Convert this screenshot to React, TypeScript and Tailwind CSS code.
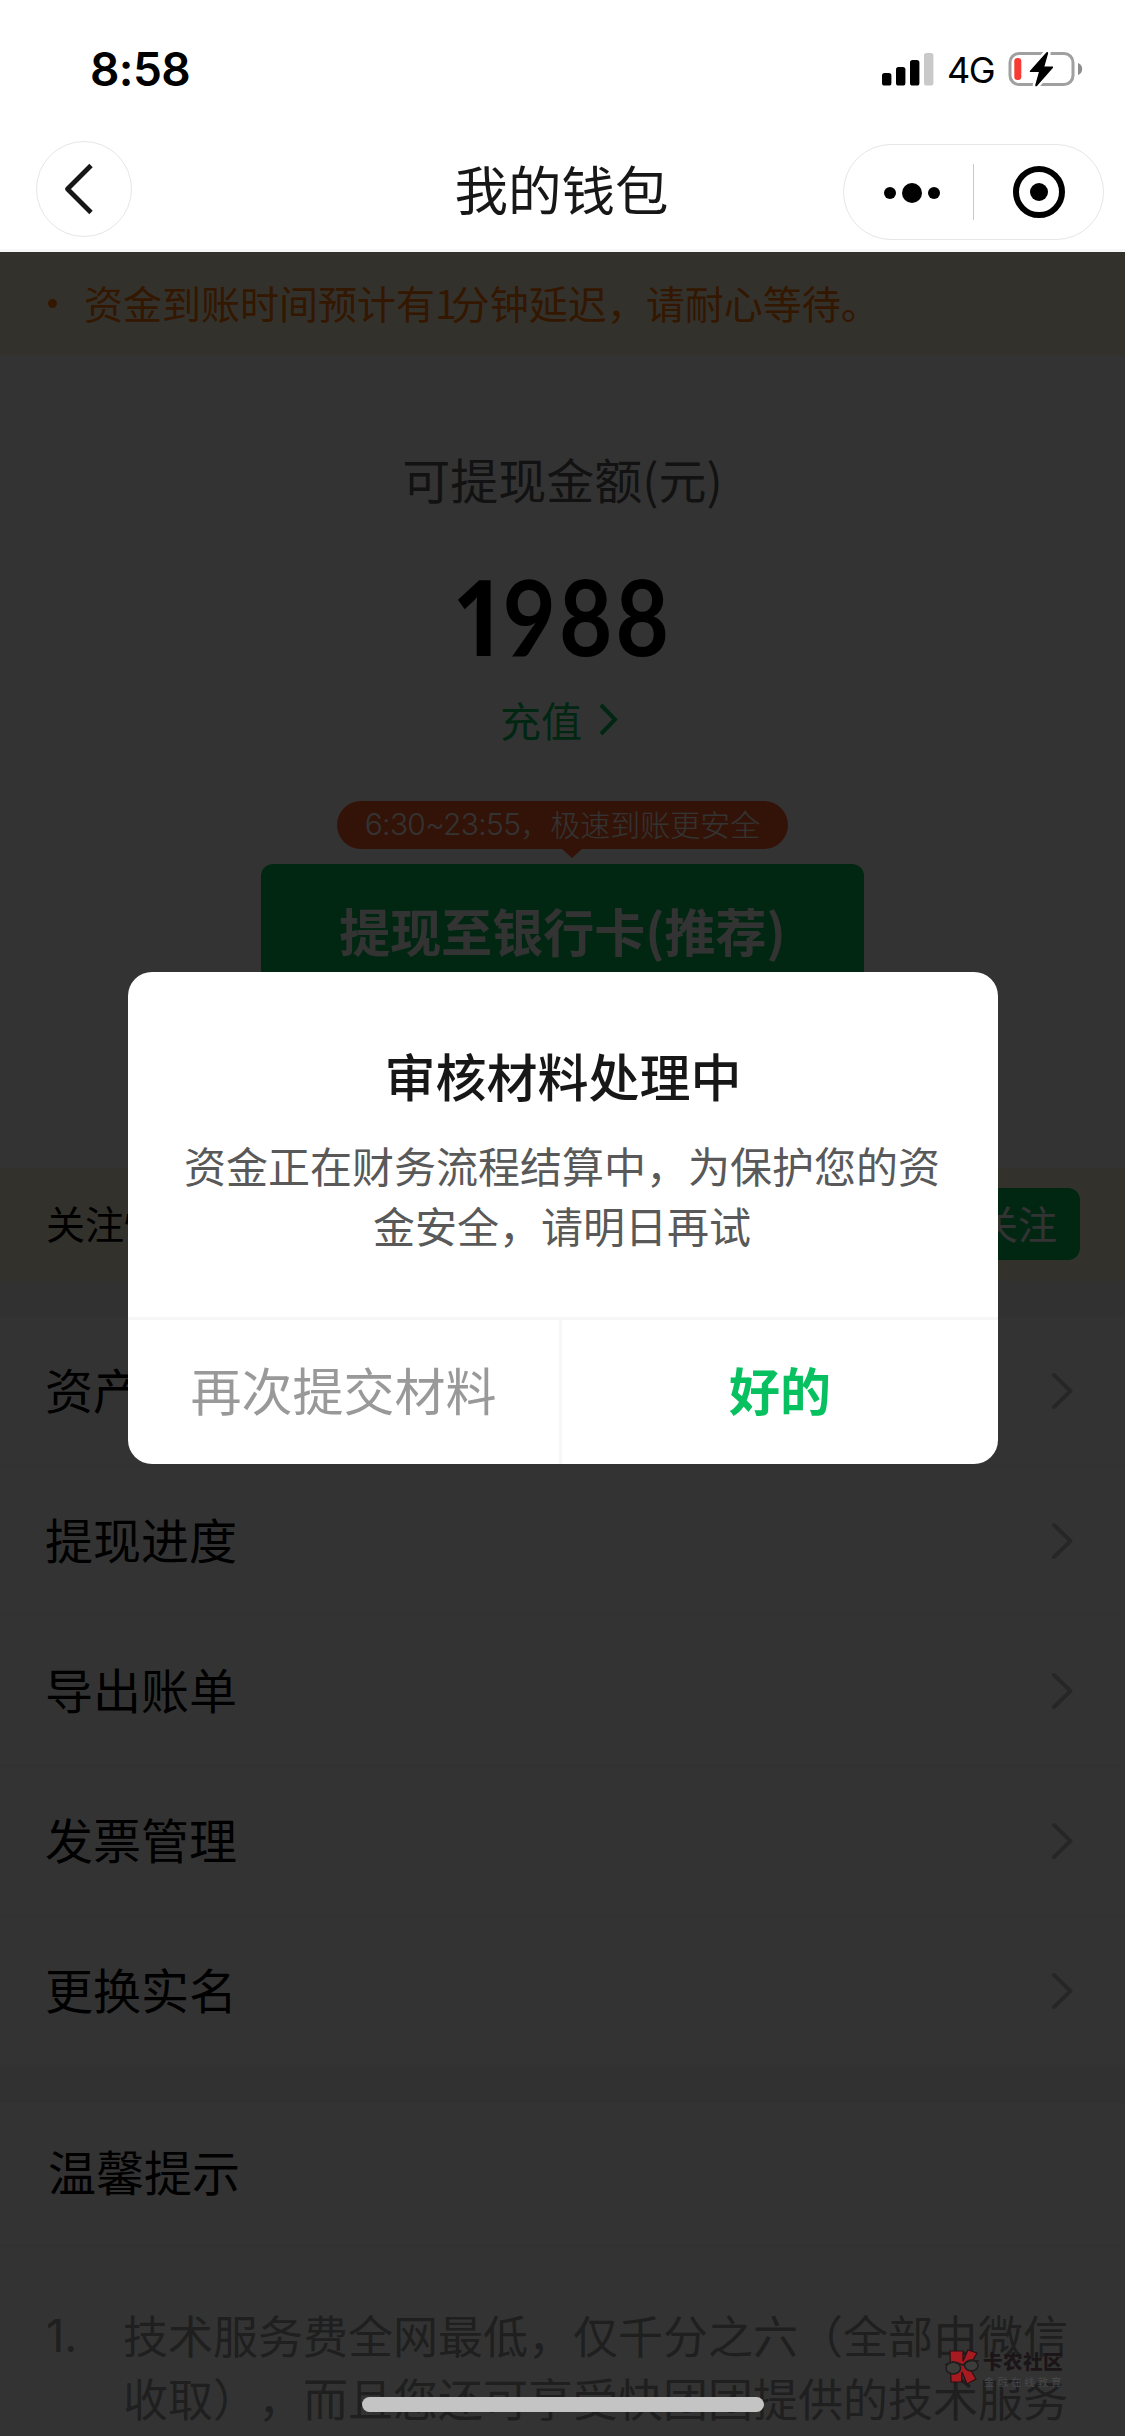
import React from "react";

const menuItems = ["资产明细", "提现进度", "导出账单", "发票管理", "更换实名"];

function StatusBar() {
  return (
    <div className="flex h-[132px] items-start justify-between pl-[90px] pr-[42px] pt-[44px]">
      <span className="font-[Inter] text-[46px] font-semibold leading-[50px] tracking-[-0.6px] text-black">8:58</span>
      <div className="flex items-center pt-[4px]">
        <svg width="52" height="34" viewBox="0 0 52 34">
          <rect x="0" y="21" width="9.4" height="12.5" rx="2.6" />
          <rect x="14" y="15" width="9.4" height="18.5" rx="2.6" />
          <rect x="28" y="8" width="9.4" height="25.5" rx="2.6" />
          <rect x="42" y="1" width="9.4" height="32.5" rx="2.6" fill="#c9c9c9" />
        </svg>
        <span className="ml-[13px] w-[49px] pt-[2px] font-[Inter] text-[36px] leading-[40px] tracking-[-1.4px] text-black">4G</span>
        <svg className="ml-[12px]" width="75" height="40" viewBox="0 0 75 40">
          <rect x="2" y="4.5" width="63" height="31" rx="9" fill="none" stroke="#a0a0a0" strokeWidth="3" />
          <path d="M70 14c2.7 1 4.2 3.3 4.2 6s-1.500 5-4.200 6z" fill="#8e8e8e" />
          <rect x="6.300" y="9" width="7" height="22" rx="3.200" fill="#f83a35" />
          <path d="M38.300 3.500 22 21.700c-.5.700-.1 1.400.7 1.400h8.200l-3.600 12.600c-.4 1.700.9 2.200 1.900 1L44.800 19c.6-.8.200-1.500-.7-1.500h-7.700l3.700-12.900c.4-1.600-.7-2.300-1.800-1.100z" fill="#000" stroke="#fff" strokeWidth="5" paintOrder="stroke" />
        </svg>
      </div>
    </div>
  );
}

function NavBar() {
  return (
    <div className="grid h-[120px] grid-cols-[1fr_auto_1fr] items-start border-b-[3px] border-[#f7f7f7]">
      <div className="ml-[36px] mt-[9px] flex h-24 w-24 items-center justify-center rounded-full border border-[#e6e6e6]">
        <svg className="mr-[10px]" width="32" height="56" viewBox="0 0 32 56" fill="none" stroke="#171717" strokeWidth="4.8" strokeLinejoin="round">
          <path d="M28 4.500 4.500 28 28 51.500" />
        </svg>
      </div>
      <h1 className="-ml-[2px] mt-[17px] text-[53.500px] leading-[78px] text-[#171717]">我的钱包</h1>
      <div className="mr-[21px] mt-[12px] flex h-24 w-[261px] items-center justify-self-end rounded-full border border-[#e6e6e6]">
        <div className="flex w-[129px] items-center justify-center gap-[6px] pl-[7px] pt-[1px]">
          <i className="h-3 w-3 rounded-full bg-black" />
          <i className="h-5 w-5 rounded-full bg-black" />
          <i className="h-3 w-3 rounded-full bg-black" />
        </div>
        <div className="h-14 w-px bg-[#c9c9c9]" />
        <div className="flex flex-1 items-center justify-center">
          <div className="flex h-[52px] w-[52px] items-center justify-center rounded-full border-[6px] border-black">
            <i className="h-[18px] w-[18px] rounded-full bg-black" />
          </div>
        </div>
      </div>
    </div>
  );
}

function Arrow() {
  return (
    <svg width="22" height="40" viewBox="0 0 22 40" fill="none" stroke="#bdbdbd" strokeWidth="4" strokeLinecap="round" strokeLinejoin="round">
      <path d="M3 4 19.500 20 3 36" />
    </svg>
  );
}

function Balance() {
  return (
    <section className="flex h-[813px] flex-col items-center">
      <p className="mt-[88px] text-[48px] leading-[70px] text-[#595959]">可提现金额(元)</p>
      <div className="mt-[47px] flex h-[110px] scale-x-[0.87] items-center text-[106px] font-bold leading-[110px] text-black">
        <span className="font-['Open_Sans'] tracking-[-3px]">1</span>
        <span className="font-[Lato] tracking-[3.500px]">988</span>
      </div>
      <div className="mr-[6px] mt-[18px] flex items-center gap-[17px] text-[#07c160]">
        <span className="text-[41px] leading-[62px]">充值</span>
        <svg width="20" height="36" viewBox="0 0 20 36" fill="none" stroke="currentColor" strokeWidth="4">
          <path d="M2 4 16 18.500 2 33" />
        </svg>
      </div>
      <div className="relative mt-[51px] flex h-12 w-[451px] items-center justify-center rounded-full bg-[#ff6023] text-white">
        <span className="flex items-center pb-[5px] text-[30px] font-light leading-[46px]">
          <span className="pt-[2px] font-[Inter] tracking-[-0.7px]">6:30~23:55</span>，极速到账更安全
        </span>
        <i className="absolute left-[225px] top-12 h-0 w-0 border-x-[10px] border-t-[9px] border-x-transparent border-t-[#ff6023]" />
      </div>
      <div className="mt-[15px] flex h-[138px] w-[603px] items-center justify-center rounded-xl bg-[#07c160] pb-[6px] text-[51px] font-bold leading-[70px] text-white">
        提现至银行卡(推荐)
      </div>
    </section>
  );
}

function FollowBar() {
  return (
    <div className="flex h-[113px] items-center justify-between bg-[#fff5d7] px-[45px] text-[39px] leading-[56px]">
      <span className="-mt-[5px] ml-px text-black">关注快团团公众号</span>
      <span className="-mt-[2px] flex h-[72px] w-[124px] items-center justify-center rounded-xl bg-[#07c160] pb-[4px] text-white">关注</span>
    </div>
  );
}

function Dialog() {
  return (
    <div className="flex h-[492px] w-[870px] flex-col overflow-hidden rounded-[24px] bg-white">
      <div className="flex-1 text-center">
        <h2 className="mt-[67px] text-[51px] font-medium leading-[72px] text-[#171717]">审核材料处理中</h2>
        <p className="ml-[55px] mr-[57px] mt-[24px] text-[42px] leading-[60px] text-[#595959]">
          资金正在财务流程结算中，为保护您的资金安全，请明日再试
        </p>
      </div>
      <div className="flex h-[147px] border-t-[3px] border-[#f7f7f7] text-[51px] leading-[72px]">
        <button className="w-[434px] border-r-[3px] border-[#f7f7f7] pb-[7px] text-[#999]">再次提交材料</button>
        <button className="flex-1 pb-[7px] font-bold text-[#07c160]">好的</button>
      </div>
    </div>
  );
}

function Watermark() {
  return (
    <div className="absolute left-[944px] top-[2348px] flex items-start gap-[3px]">
      <svg width="36" height="37" viewBox="0 0 36 37">
        <path d="M6 3h13v10l5-11 9 3-8 14 7 12-9 5-5-12-.500 10H7z" fill="#a71a20" stroke="#251315" strokeWidth="1.200" />
        <ellipse cx="9.300" cy="20" rx="7.300" ry="6" fill="#3c3d3b" stroke="#211d1d" strokeWidth="1.600" />
        <ellipse cx="27.300" cy="17.500" rx="6.700" ry="5.500" fill="#3c3d3b" stroke="#211d1d" strokeWidth="1.600" />
        <path d="M1 17c4-3 11-4 15-1l3 1 2-2c4-3 9-3 14-2" fill="none" stroke="#211d1d" strokeWidth="1.600" />
      </svg>
      <div className="flex flex-col">
        <span className="text-[19.500px] font-black leading-[26px] tracking-[0.5px] text-[#1b1517]">卡农社区</span>
        <span className="ml-px text-[10.500px] leading-[15px] tracking-[2.900px] text-[#4a4a4a]">金融在线教育</span>
      </div>
    </div>
  );
}

export default function App() {
  return (
    <div className="relative flex h-[2436px] w-[1125px] flex-col overflow-hidden bg-white font-['Noto_Sans_CJK_SC',sans-serif] [text-spacing-trim:space-all]">
      <header>
        <StatusBar />
        <NavBar />
      </header>
      <main className="relative h-[2184px] overflow-hidden bg-white">
        <div className="flex h-[103px] items-center bg-[#fff5dc] pl-[48px] text-[39px] leading-[56px] text-[#ff7300]">
          <i className="mr-[27px] h-[9px] w-[9px] rounded-full bg-[#ff7300]" />
          <span className="pb-[4px]">
            资金到账时间预计有<span className="tracking-[-6px]">1</span>分钟延迟，请耐心等待。
          </span>
        </div>
        <Balance />
        <FollowBar />
        <div className="h-9 bg-[#f2f2f2]" />
        <ul>
          {menuItems.map((item) => (
            <li key={item} className="flex h-[150px] items-center justify-between border-b-[3px] border-[#f7f7f7] pl-[45px] pr-[52px] text-[48px] leading-[70px] text-black">
              <span className="pb-[6px]">{item}</span>
              <Arrow />
            </li>
          ))}
        </ul>
        <div className="h-9 bg-[#f2f2f2]" />
        <h3 className="flex h-[144px] items-center border-b-[3px] border-[#f7f7f7] pb-[7px] pl-[48px] text-[48px] leading-[70px] text-black">温馨提示</h3>
        <div className="flex pl-[46px] pt-[56px] text-[45px] leading-[63px] text-[#999]">
          <span className="w-[77px] pt-px font-[Inter]">1.</span>
          <p className="w-[950px] shrink-0">
            技术服务费全网最低，仅千分之六（全部由微信
            <br />
            收取），而且您还可享受快团团提供的技术服务
          </p>
        </div>
        <div className="absolute inset-0 flex items-start bg-black/80 pl-[128px] pt-[720px]">
          <Dialog />
        </div>
      </main>
      <Watermark />
      <div className="absolute left-[362px] top-[2397px] h-[15px] w-[402px] rounded-full bg-[#c4c4c4]" />
    </div>
  );
}
